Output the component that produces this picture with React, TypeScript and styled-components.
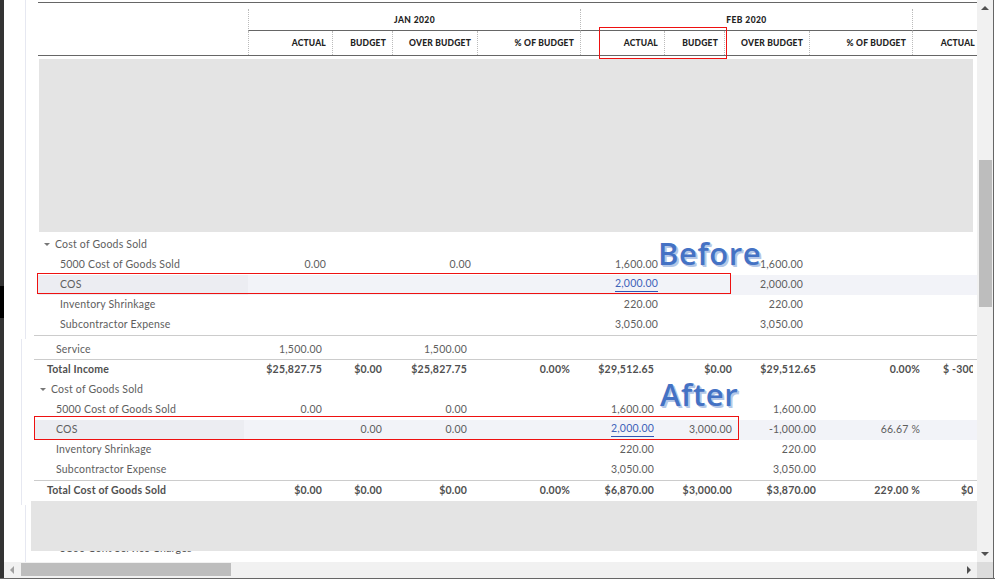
import React from "react";
import styled, { createGlobalStyle } from "styled-components";

const GlobalStyle = createGlobalStyle`
  html, body {
    margin: 0;
    padding: 0;
    background: #ffffff;
    overflow: hidden;
  }
`;

const TOP_COLS = "210px 84px 60px 85px 103px 84px 60px 85px 103px 84px";
const BOTTOM_COLS = "210px 84px 60px 85px 103px 84px 78px 84px 104px 47px";

type RowData = { label: string; cells?: string[] };

const topRows: RowData[] = [
  { label: "5000 Cost of Goods Sold", cells: ["0.00", "", "0.00", "", "1,600.00", "", "1,600.00"] },
  { label: "COS", cells: ["", "", "", "", "2,000.00", "", "2,000.00"] },
  { label: "Inventory Shrinkage", cells: ["", "", "", "", "220.00", "", "220.00"] },
  { label: "Subcontractor Expense", cells: ["", "", "", "", "3,050.00", "", "3,050.00"] },
];

const bottomRows: RowData[] = [
  { label: "5000 Cost of Goods Sold", cells: ["0.00", "", "0.00", "", "1,600.00", "", "1,600.00"] },
  { label: "COS", cells: ["", "0.00", "0.00", "", "2,000.00", "3,000.00", "-1,000.00", "66.67 %"] },
  { label: "Inventory Shrinkage", cells: ["", "", "", "", "220.00", "", "220.00"] },
  { label: "Subcontractor Expense", cells: ["", "", "", "", "3,050.00", "", "3,050.00"] },
];

const App: React.FC = () => {
  const renderRows = (rows: RowData[], cols: string) =>
    rows.map((row) => (
      <Row key={row.label} $cols={cols} $hover={row.label === "COS"}>
        <LabelCell $indent={22} $hover={row.label === "COS"}>{row.label}</LabelCell>
        {row.cells?.map((value, i) => (
          <Cell key={i}>
            {value === "2,000.00" && i === 4 ? <AmountLink>{value}</AmountLink> : value}
          </Cell>
        ))}
      </Row>
    ));

  return (
    <>
      <GlobalStyle />
      <Window>
        <Rail />
        <Viewport>
          <Gutter>
            <GutterPiece $h={339} $w={22} />
            <GutterPiece $h={166} $w={18} />
            <GutterPiece $h={57} $w={22} />
          </Gutter>
          <Report>
            <HeaderTable>
              <HeaderLabel />
              <MonthGroup>
                <MonthTitle>JAN 2020</MonthTitle>
                <SubHeads $cols="84px 60px 85px 103px">
                  <SubHead>ACTUAL</SubHead>
                  <SubHead>BUDGET</SubHead>
                  <SubHead>OVER BUDGET</SubHead>
                  <SubHead>% OF BUDGET</SubHead>
                </SubHeads>
              </MonthGroup>
              <MonthGroup>
                <MonthTitle>FEB 2020</MonthTitle>
                <SubHeads $cols="84px 60px 85px 103px">
                  <SubHead>ACTUAL</SubHead>
                  <SubHead>BUDGET</SubHead>
                  <SubHead>OVER BUDGET</SubHead>
                  <SubHead>% OF BUDGET</SubHead>
                </SubHeads>
              </MonthGroup>
              <MonthGroup>
                <MonthTitle />
                <SubHeads $cols="1fr">
                  <SubHead $clip>ACTUAL</SubHead>
                </SubHeads>
              </MonthGroup>
            </HeaderTable>

            <RedactedTop />

            <Section>
              <Row $cols={TOP_COLS}>
                <LabelCell $indent={6}>
                  <Caret />
                  Cost of Goods Sold
                </LabelCell>
              </Row>
              {renderRows(topRows, TOP_COLS)}
            </Section>

            <Shifted>
              <Rule />
              <Row $cols={BOTTOM_COLS} $height={23} $padTop={4}>
                <LabelCell $indent={22}>Service</LabelCell>
                <Cell>1,500.00</Cell>
                <Cell />
                <Cell>1,500.00</Cell>
              </Row>
              <Rule />
              <Row $cols={BOTTOM_COLS}>
                <LabelCell $indent={13} $strong>Total Income</LabelCell>
                <Cell $strong>$25,827.75</Cell>
                <Cell $strong>$0.00</Cell>
                <Cell $strong>$25,827.75</Cell>
                <Cell $strong>0.00%</Cell>
                <Cell $strong>$29,512.65</Cell>
                <Cell $strong>$0.00</Cell>
                <Cell $strong>$29,512.65</Cell>
                <Cell $strong>0.00%</Cell>
                <Cell $strong $lead={17}>$ -300</Cell>
              </Row>
              <Row $cols={BOTTOM_COLS}>
                <LabelCell $indent={6}>
                  <Caret />
                  Cost of Goods Sold
                </LabelCell>
              </Row>
              {renderRows(bottomRows, BOTTOM_COLS)}
              <Rule />
              <Row $cols={BOTTOM_COLS}>
                <LabelCell $indent={13} $strong>Total Cost of Goods Sold</LabelCell>
                <Cell $strong>$0.00</Cell>
                <Cell $strong>$0.00</Cell>
                <Cell $strong>$0.00</Cell>
                <Cell $strong>0.00%</Cell>
                <Cell $strong>$6,870.00</Cell>
                <Cell $strong>$3,000.00</Cell>
                <Cell $strong>$3,870.00</Cell>
                <Cell $strong>229.00 %</Cell>
                <Cell $strong $lead={35}>$0</Cell>
              </Row>
            </Shifted>

            <RedactedBottom />
            <CutOffRow>5100 Cont Service Charges</CutOffRow>
          </Report>

          <RedBox $x={599} $y={27} $w={128} $h={32} />
          <RedBox $x={37} $y={273} $w={694} $h={21} />
          <RedBox $x={34} $y={416} $w={705} $h={24} />
          <Callout $x={658} $y={231}>Before</Callout>
          <Callout $x={660} $y={372}>After</Callout>
        </Viewport>

        <VScroll>
          <ScrollArrow $dir="up" />
          <VTrack>
            <VThumb />
          </VTrack>
          <ScrollArrow $dir="down" />
        </VScroll>

        <HScroll>
          <ScrollArrow $dir="left" />
          <HTrack>
            <HThumb />
          </HTrack>
          <ScrollArrow $dir="right" />
        </HScroll>
        <Corner />
        <RightEdge />

        <BehindStrip>
          <span>Manage Multi Account</span>
          <GreenLink>Manage Users</GreenLink>
          <span>Use Product or Services</span>
        </BehindStrip>
      </Window>
    </>
  );
};

const Window = styled.div`
  width: 995px;
  height: 581px;
  display: grid;
  grid-template-columns: 4px 973px 16px 2px;
  grid-template-rows: 562px 16px 3px;
  background: #ffffff;
  overflow: hidden;
  font-family: "Lato", "Open Sans", sans-serif;
`;

const Rail = styled.div`
  grid-column: 1;
  grid-row: 1 / 3;
  background: linear-gradient(
    #333333 0,
    #333333 286px,
    #000000 286px,
    #000000 318px,
    #333333 318px
  );
`;

const Viewport = styled.div`
  grid-column: 2;
  grid-row: 1;
  position: relative;
  overflow: hidden;
  display: flex;
`;

const Gutter = styled.div`
  width: 22px;
  flex: none;
  display: flex;
  flex-direction: column;
`;

const GutterPiece = styled.div<{ $h: number; $w: number }>`
  width: ${(p) => p.$w}px;
  height: ${(p) => p.$h}px;
  flex: none;
  border-right: 1px solid #e6e8f1;
  box-sizing: border-box;
`;

const Report = styled.div`
  width: 947px;
  flex: none;
  padding: 2px 0 0 12px;
  box-sizing: border-box;
`;

const HeaderTable = styled.div`
  display: grid;
  grid-template-columns: 210px 332px 332px 1fr;
  box-sizing: border-box;
  height: 54px;
  margin-right: -4px;
  border-top: 1px solid #666666;
  border-bottom: 1px solid #666666;
`;

const HeaderLabel = styled.div``;

const MonthGroup = styled.div`
  display: flex;
  flex-direction: column;
  padding-top: 6px;
  min-width: 0;
  overflow: hidden;
`;

const MonthTitle = styled.div`
  height: 21px;
  flex: none;
  border-left: 1px dotted #bbbbbb;
  border-bottom: 1px solid #666666;
  font-size: 8.5px;
  font-weight: 900;
  letter-spacing: 0.4px;
  color: #222222;
  text-align: center;
  line-height: 23px;
`;

const SubHeads = styled.div<{ $cols: string }>`
  flex: 1;
  display: grid;
  grid-template-columns: ${(p) => p.$cols};
`;

const SubHead = styled.div<{ $clip?: boolean }>`
  border-left: 1px dotted #bbbbbb;
  padding-right: ${(p) => (p.$clip ? "2px" : "6px")};
  font-size: 8.5px;
  font-weight: 900;
  letter-spacing: 0.2px;
  line-height: 24px;
  color: #222222;
  text-align: right;
  white-space: nowrap;
`;

const RedactedTop = styled.div`
  height: 173px;
  margin: 3px 0 0 1px;
  width: 934px;
  background: #e4e4e4;
`;

const Section = styled.div`
  padding-top: 3px;
`;

const Shifted = styled.div`
  margin-left: -4px;
`;

const Rule = styled.div`
  height: 1px;
  background: #cccccc;
  margin-right: -4px;
`;

const Row = styled.div<{ $cols: string; $hover?: boolean; $height?: number; $padTop?: number }>`
  display: grid;
  grid-template-columns: ${(p) => p.$cols};
  box-sizing: border-box;
  height: ${(p) => p.$height ?? 20}px;
  padding-top: ${(p) => p.$padTop ?? 0}px;
  align-items: center;
  margin-right: -6px;
  background: ${(p) => (p.$hover ? "#f2f3f8" : "transparent")};
`;

const LabelCell = styled.div<{ $indent: number; $strong?: boolean; $hover?: boolean }>`
  display: flex;
  align-items: center;
  box-sizing: border-box;
  height: 100%;
  padding-left: ${(p) => p.$indent}px;
  padding-bottom: 2px;
  font-size: 10.5px;
  font-weight: ${(p) => (p.$strong ? 700 : 400)};
  letter-spacing: 0.2px;
  color: ${(p) => (p.$strong ? "#505050" : "#5e5e5e")};
  background: ${(p) => (p.$hover ? "#ecedf2" : "transparent")};
  white-space: nowrap;
`;

const Cell = styled.div<{ $strong?: boolean; $lead?: number }>`
  padding-right: ${(p) => (p.$lead ? 0 : 6)}px;
  padding-left: ${(p) => p.$lead ?? 0}px;
  padding-bottom: 2px;
  font-size: 10.5px;
  font-weight: ${(p) => (p.$strong ? 700 : 400)};
  letter-spacing: 0.2px;
  color: ${(p) => (p.$strong ? "#505050" : "#5e5e5e")};
  text-align: ${(p) => (p.$lead ? "left" : "right")};
  white-space: nowrap;
  overflow: hidden;
`;

const AmountLink = styled.span`
  color: #3d62b8;
  display: inline-block;
  line-height: 13px;
  padding-bottom: 1px;
  border-bottom: 1px solid #2f55b5;
`;

const Caret = styled.span`
  width: 0;
  height: 0;
  margin-right: 5px;
  border-left: 3px solid transparent;
  border-right: 3px solid transparent;
  border-top: 3px solid #777777;
`;

const RedactedBottom = styled.div`
  position: relative;
  z-index: 1;
  height: 50px;
  width: 946px;
  margin: 0 0 0 -7px;
  background: #e4e4e4;
`;

const CutOffRow = styled.div`
  margin: -10px 0 0 22px;
  font-size: 10.5px;
  letter-spacing: 0.25px;
  line-height: 14px;
  color: #555555;
`;

const RedBox = styled.div<{ $x: number; $y: number; $w: number; $h: number }>`
  position: absolute;
  left: ${(p) => p.$x - 4}px;
  top: ${(p) => p.$y}px;
  width: ${(p) => p.$w}px;
  height: ${(p) => p.$h}px;
  box-sizing: border-box;
  border: 1px solid #ee1111;
  z-index: 2;
`;

const Callout = styled.div<{ $x: number; $y: number }>`
  position: absolute;
  left: ${(p) => p.$x - 4}px;
  top: ${(p) => p.$y}px;
  z-index: 3;
  font-family: "Open Sans", sans-serif;
  font-size: 31px;
  font-weight: 600;
  letter-spacing: 0.6px;
  line-height: 44px;
  color: #4472c4;
  text-shadow: 1px 1px 0 #b4c7e7, 2px 2px 0 #b4c7e7;
`;

const VScroll = styled.div`
  grid-column: 3;
  grid-row: 1;
  display: flex;
  flex-direction: column;
  background: #f1f1f1;
`;

const VTrack = styled.div`
  flex: 1;
  padding: 144px 1px 0 2px;
`;

const VThumb = styled.div`
  height: 147px;
  background: #bdbdbd;
`;

const HScroll = styled.div`
  grid-column: 2;
  grid-row: 2;
  display: flex;
  background: #f1f1f1;
`;

const HTrack = styled.div`
  flex: 1;
  padding: 1px 0 2px 1px;
`;

const HThumb = styled.div`
  width: 210px;
  height: 13px;
  background: #bdbdbd;
`;

const Corner = styled.div`
  grid-column: 3;
  grid-row: 2;
  background: #dcdcdc;
`;

const RightEdge = styled.div`
  grid-column: 4;
  grid-row: 1 / 3;
  border-left: 1px solid #666666;
`;

const arrowBorders = {
  up: "border-left: 4px solid transparent; border-right: 4px solid transparent; border-bottom: 4px solid #505050;",
  down: "border-left: 4px solid transparent; border-right: 4px solid transparent; border-top: 4px solid #505050;",
  left: "border-top: 4px solid transparent; border-bottom: 4px solid transparent; border-right: 4px solid #a0a0a0;",
  right: "border-top: 4px solid transparent; border-bottom: 4px solid transparent; border-left: 4px solid #505050;",
};

const ScrollArrow = styled.div<{ $dir: keyof typeof arrowBorders }>`
  flex: none;
  width: 16px;
  height: 16px;
  display: flex;
  align-items: center;
  justify-content: center;

  &::before {
    content: "";
    width: 0;
    height: 0;
    ${(p) => arrowBorders[p.$dir]}
  }
`;

const BehindStrip = styled.div`
  grid-column: 1 / 5;
  grid-row: 3;
  display: flex;
  gap: 30px;
  padding-left: 78px;
  border-top: 1px solid #666666;
  background: #ffffff;
  font-size: 13px;
  line-height: 15px;
  color: #333333;
  overflow: hidden;
  white-space: nowrap;
`;

const GreenLink = styled.span`
  color: #0a6b3d;
`;

export default App;
